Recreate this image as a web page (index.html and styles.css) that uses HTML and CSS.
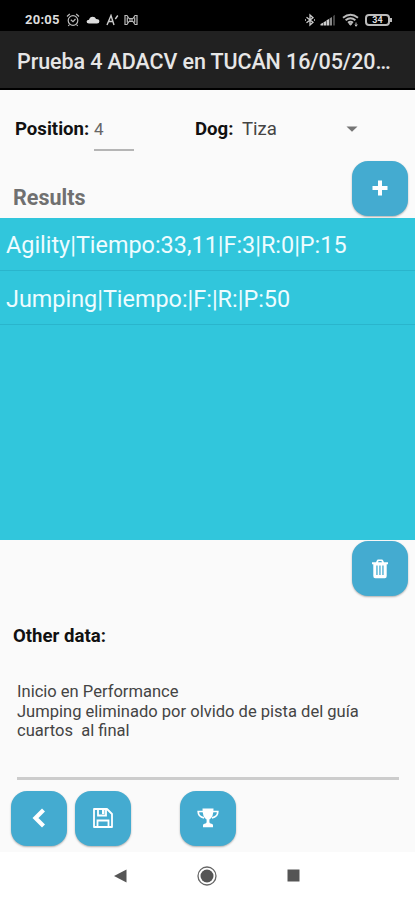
FILE: index.html
```html
<!DOCTYPE html>
<html lang="en">
<head>
<meta charset="utf-8">
<title>Results</title>
<link rel="stylesheet" href="styles.css">
</head>
<body>
<div class="status">
  <span class="clock">20:05</span>
  <svg class="alarm" width="14" height="14" viewBox="0 0 14 14" fill="none" stroke="#bbb" stroke-width="1.2"><circle cx="7" cy="7.5" r="4.8"/><path d="M1 3.5 3.8 1M13 3.5 10.2 1M4.8 6.8 7 8.7 9.5 6M3.5 11.5 2.3 13M10.5 11.5 11.7 13"/></svg>
  <svg class="cloud" width="14" height="8" viewBox="0 0 14 8"><path d="M3 7.5Q.5 7.2.6 5.4.8 3.8 3 3.8 3.8.8 6.7.8q2.5 0 3.4 2.3 3.1 0 3.3 2.2 0 2.2-2.4 2.2z" fill="#ddd"/></svg>
  <svg class="letter" width="14" height="12" viewBox="0 0 14 12" fill="none" stroke="#ccc" stroke-width="1.4"><path d="M1 11 5 1.5 8 11M2.5 7.5H7M9.3 5 11.8 1.5"/></svg>
  <svg class="link" width="14" height="12" viewBox="0 0 14 12" fill="none" stroke="#bbb" stroke-width="1.2"><path d="M1 1.5H3L5 4.5H9L11 1.5H13V10.5H11L9 7.5H5L3 10.5H1zM3.3 3.5V8.5M10.7 3.5V8.5M6 4.5V7.5M8 4.5V7.5"/></svg>
  <svg class="bluetooth" width="12" height="14" viewBox="0 0 12 14" fill="none" stroke="#ccc" stroke-width="1.3"><path d="M2.5 4.2 9 9.3 6 12V2L9 4.7 2.5 9.8"/><path d="M1 7H2M10 7H11"/></svg>
  <svg class="signal" width="16" height="12" viewBox="0 0 16 12"><path d="M.5 11.5V10L3 8.8V11.5zM3.5 11.5V8.3L6 7V11.5zM6.5 11.5V6.3L9 5V11.5z" fill="#ccc"/><path d="M9.5 11.5V4.4L12 3V11.5z" fill="#888"/><path d="M13 11.5V2L15 .8V11.5z" fill="#444"/></svg>
  <svg class="wifi" width="17" height="14" viewBox="0 0 17 14" fill="none" stroke="#bbb" stroke-width="1.9"><path d="M1 4.7Q8.5-1.3 16 4.7M3.6 7.3Q8.5 3.3 13.4 7.3M6 9.7Q8.5 7.8 11 9.7"/><path d="M7 10.6H10L8.5 12.3zM14 9.5V13.5M12.8 11.8 14 13 15.5 11.8" fill="#bbb" stroke-width="1"/></svg>
  <div class="battery">34</div>
</div>
<header class="title">Prueba 4 ADACV en TUCÁN 16/05/2021</header>
<main>
  <div class="fields">
    <span class="label">Position:</span>
    <span class="position">4</span>
    <span class="label dog">Dog:</span>
    <span class="select">Tiza</span>
    <svg width="12" height="6" viewBox="0 0 12 6"><path d="M.5.5H11.5L6 5.8z" fill="#757575"/></svg>
  </div>
  <div class="results">
    <h2>Results</h2>
    <button class="btn" aria-label="Add"><svg width="16" height="16" viewBox="0 0 16 16"><path d="M6 .5H10V6H15.5V10H10V15.5H6V10H.5V6H6z" fill="#fff"/></svg></button>
  </div>
  <div class="list">
    <div class="item first">Agility|Tiempo:33,11|F:3|R:0|P:15</div>
    <div class="item second">Jumping|Tiempo:|F:|R:|P:50</div>
  </div>
  <div class="delete">
    <button class="btn" aria-label="Delete"><svg width="18" height="20" viewBox="0 0 18 20"><path fill="#fff" fill-rule="evenodd" d="M1 3.2H5L6 1.2Q6.3.6 7 .6H11Q11.7.6 12 1.2L13 3.2H17V5.2H15.7V17Q15.7 19.2 13.8 19.2H4.2Q2.3 19.2 2.3 17V5.2H1zM7 3.2H11L10.4 2H7.6zM5.3 6.5V16H6.6V6.5zM8.3 6.5V16H9.6V6.5zM11.3 6.5V16H12.6V6.5z"/></svg></button>
  </div>
  <div class="other">Other data:</div>
  <div class="notes">Inicio en Performance
Jumping eliminado por olvido de pista del guía
cuartos  al final</div>
  <div class="actions">
    <button class="btn" aria-label="Back"><svg class="back" width="16" height="20" viewBox="0 0 16 20"><path d="M12.5 2 4.5 10 12.5 18" fill="none" stroke="#fff" stroke-width="4.2"/></svg></button>
    <button class="btn" aria-label="Save"><svg width="20" height="20" viewBox="0 0 20 20" fill="none" stroke="#fff" stroke-width="1.8"><path d="M1 1H14L19 6V19H1z" stroke-linejoin="round"/><path d="M4.5 19V12.5H15.5V19M5 1V7.5H13V1"/><path d="M9 2H11.5V6H9z" fill="#fff" stroke="none"/></svg></button>
    <button class="btn trophy" aria-label="Trophy"><svg width="22" height="20" viewBox="0 0 22 20"><path d="M6 3.5H1.2Q1.2 9 7 9.8M16 3.5H20.8Q20.8 9 15 9.8" fill="none" stroke="#fff" stroke-width="1.7"/><path d="M5.5.6H16.5Q16.7 9.2 12.4 11.6V14.3Q12.5 15.5 14.5 15.7 16 16 16 17.2V19.3H6V17.2Q6 16 7.5 15.7 9.5 15.5 9.6 14.3V11.6Q5.3 9.2 5.5.6z" fill="#fff"/></svg></button>
  </div>
</main>
<nav class="nav">
  <svg width="13" height="14" viewBox="0 0 13 14"><path d="M0 7 12.5.5V13.5z" fill="#555"/></svg>
  <svg width="20" height="20" viewBox="0 0 20 20"><circle cx="10" cy="10" r="9" fill="none" stroke="#666" stroke-width="1.3"/><circle cx="10" cy="10" r="6.5" fill="#555"/></svg>
  <svg width="13" height="13" viewBox="0 0 13 13"><path d="M.5.5H12.5V12.5H.5z" fill="#555"/></svg>
</nav>
</body>
</html>
```
FILE: styles.css
```css
* { box-sizing: border-box; }
body { margin: 0; width: 415px; height: 900px; overflow: hidden; background: #fafafa; font-family: Roboto, sans-serif; color: #111; display: flex; flex-direction: column; }
svg { display: block; flex: none; }
.status { height: 31px; flex: none; background: #000; color: #ddd; display: flex; align-items: center; padding: 8px 25px 0 25px; }
.clock { width: 41px; font-size: 13px; font-weight: 700; letter-spacing: .25px; }
.cloud { margin-left: 6px; }
.letter { margin-left: 6px; }
.link { margin-left: 4px; }
.bluetooth { margin-left: auto; }
.signal { margin-left: 4px; }
.wifi { margin-left: 6px; }
.battery { width: 25px; height: 12px; margin-left: 6px; border: 2px solid #bbb; border-radius: 4px; font-size: 9px; line-height: 8px; font-weight: 700; text-align: center; position: relative; }
.battery::after { content: ""; position: absolute; right: -4px; top: 2px; width: 2px; height: 4px; background: #bbb; }
.title { height: 59px; flex: none; padding: 0 22px 0 17px; background: #212121; border-bottom: 2px solid #000; color: #e6e6e6; font-size: 21.5px; font-weight: 500; letter-spacing: -.09px; line-height: 62px; white-space: nowrap; overflow: hidden; text-overflow: ellipsis; }
main { height: 762px; flex: none; }
.fields { height: 71px; display: flex; align-items: center; padding: 6px 57px 0 15px; font-size: 18.6px; }
.label { font-weight: 700; width: 79px; white-space: nowrap; }
.position { width: 40px; height: 42px; border-bottom: 2px solid #b5b5b5; line-height: 40px; font-size: 17px; color: #666; position: relative; top: 1px; }
.dog { width: 47px; margin-left: 61px; }
.select { flex: 1; color: #444; }
.results { height: 57px; display: flex; justify-content: space-between; padding: 0 7px 0 13px; }
.results h2 { margin: 0; font-size: 21.5px; font-weight: 700; line-height: 73px; color: #707070; }
.btn { width: 56px; height: 55px; flex: none; padding: 0; border: 0; border-radius: 16px; background: #44abd0; display: flex; align-items: center; justify-content: center; box-shadow: 0 1px 2px rgb(0 0 0 / 30%); }
.results .btn { padding-bottom: 1px; }
.list { height: 322px; background: #31c6dc; color: #eefcff; font-size: 23.4px; }
.item { height: 54px; padding-left: 6px; line-height: 57px; border-bottom: 1px solid #2ab5cc; white-space: nowrap; }
.first { height: 53px; line-height: 55px; }
.delete { height: 82px; display: flex; justify-content: flex-end; padding: 1px 7px 0; }
.other { margin-left: 13px; height: 28px; line-height: 28px; font-size: 18.6px; font-weight: 700; }
.notes { height: 130px; margin: 0 16px 0 17px; padding-top: 32px; border-bottom: 3px solid #ccc; font-size: 16.55px; line-height: 19.7px; white-space: pre; color: #444; }
.actions { display: flex; gap: 8px; padding: 11px 11px 0; }
.actions svg { margin-bottom: 2px; }
.trophy { margin-left: 41px; }
.nav { height: 48px; flex: none; background: #fff; display: flex; align-items: center; justify-content: space-between; padding: 0 115px 1px 114px; }
```
